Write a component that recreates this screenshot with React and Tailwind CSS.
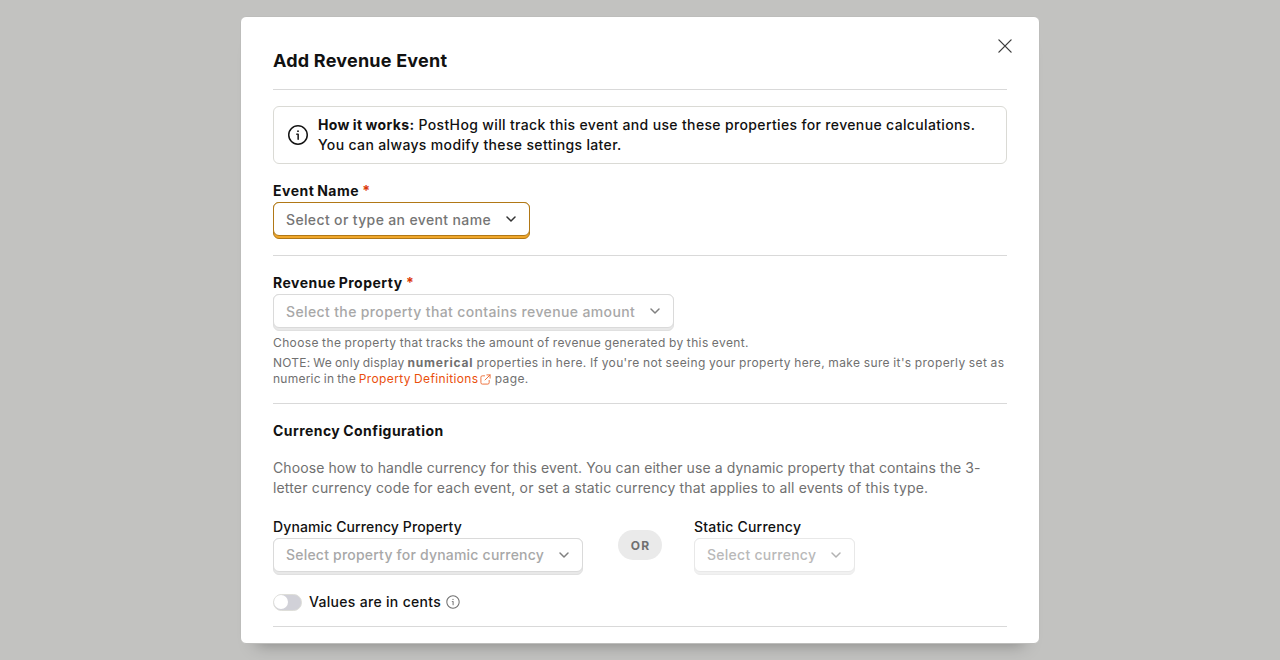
import React from "react";

function Divider({ className = "" }) {
  return <div className={"h-px shrink-0 bg-[#d9d9d9] " + className} />;
}

function Chevron({ className = "" }) {
  return (
    <svg viewBox="0 0 12 8" className={"h-2 w-3 shrink-0 " + className} fill="none" stroke="currentColor" strokeWidth="1.5" strokeLinecap="round" strokeLinejoin="round">
      <path d="M2 2 6 6 10 2" />
    </svg>
  );
}

function InfoIcon({ className = "" }) {
  return (
    <svg viewBox="0 0 24 24" className={"shrink-0 " + className} fill="currentColor">
      <path fillRule="evenodd" d="M12 3.5a8.5 8.5 0 1 0 0 17 8.5 8.5 0 0 0 0-17ZM2 12C2 6.477 6.477 2 12 2s10 4.477 10 10-4.477 10-10 10S2 17.523 2 12Z" />
      <path d="M10 11.150a.65.65 0 0 1 .65-.65h1.500a.75.75 0 0 1 .75.75v5a.75.75 0 0 1-1.500 0v-4.450h-.75a.65.65 0 0 1-.65-.65Z" />
      <circle cx="12" cy="8.200" r="0.900" />
    </svg>
  );
}

function SelectButton({ children, width, active, faded, raised, spacing }) {
  const frame = active ? "border-[#b17816] bg-[#f1a82c]" : "border-[#e0e0e0] bg-[#e8e8e8]";
  const face = active ? "border-[#b17816]" : "border-[#dadada]";
  return (
    <div className={"flex h-[37px] flex-col rounded-md border " + frame + " " + width + (faded ? " opacity-60" : "")}>
      <div className={"-mx-px -mt-px flex h-[34px] items-center justify-between rounded-md border bg-white pl-3 pr-3 " + face}>
        <span className={"whitespace-nowrap text-sm font-medium leading-5 " + spacing + (raised ? "" : " pt-px") + (active ? " text-[#757575]" : faded ? " text-[#8c8c8c]" : " text-[#a8a8a8]")}>{children}</span>
        <Chevron className={active ? "text-[#333333]" : "text-[#808080]"} />
      </div>
    </div>
  );
}

function Label({ children, bold, required, spacing = "" }) {
  return (
    <div className={"mb-px h-5 whitespace-nowrap text-sm leading-5 " + (bold ? "font-bold tracking-[0.49px] [word-spacing:-0.9px] " : "font-medium ") + spacing}>
      {children}
      {required && <span className="text-[#db3707] [word-spacing:-0.5px]"> *</span>}
    </div>
  );
}

export default function App() {
  return (
    <div className="flex h-[660px] w-full justify-center overflow-hidden bg-[#c2c2c0] pt-4 font-['Inter',sans-serif] text-[#111111]">
      <div className="relative flex h-[628px] w-[800px] flex-col rounded-md border border-[#bdbdbb] bg-white px-8 pt-8 shadow-[0_16px_16px_-16px_rgba(0,0,0,0.35)]">
        <button className="absolute right-[25px] top-[20px] flex size-[18px] items-center justify-center" aria-label="Close">
          <svg viewBox="0 0 18 18" className="size-[18px]" fill="none" stroke="#3c3c3c" strokeWidth="1.3" strokeLinecap="round">
            <path d="M2.900 2.900 15.100 15.100M15.100 2.900 2.900 15.100" />
          </svg>
        </button>
        <h3 className="h-6 text-lg font-bold leading-6 tracking-[0.22px]">Add Revenue Event</h3>
        <Divider className="mt-4" />
        <div className="mt-4 flex h-[58px] items-center rounded-md border border-[#dadad5] pl-3">
          <InfoIcon className="size-6" />
          <p className="ml-2 text-sm font-medium leading-5 tracking-[0.35px]">
            <strong className="font-bold tracking-[0.36px] [word-spacing:-0.7px]">How it works:</strong> PostHog will track this event and use these properties for revenue calculations.
            <br />
            You can always modify these settings later.
          </p>
        </div>

        <div className="mt-[17px]">
          <Label bold required>Event Name</Label>
          <SelectButton width="w-[257px]" spacing="tracking-[0.36px]" active>Select or type an event name</SelectButton>
        </div>
        <Divider className="mt-4" />

        <div className="mt-[17px]">
          <Label bold required>Revenue Property</Label>
          <SelectButton width="w-[401px]" spacing="tracking-[0.37px]">Select the property that contains revenue amount</SelectButton>
          <p className="mt-1 text-xs leading-4 tracking-[0.38px] text-[#707070] [word-spacing:-0.5px]">Choose the property that tracks the amount of revenue generated by this event.</p>
          <p className="mt-1 whitespace-nowrap text-xs leading-4 tracking-[0.39px] text-[#707070] [word-spacing:-0.5px]">
            <span className="tracking-[0.25px] [word-spacing:-0.8px]">NOTE: We only display </span>
            <strong className="font-bold tracking-[0.8px]">numerical</strong> properties in here. If you're not seeing your property here, make sure it's properly set as
            <br />
            <span className="tracking-[0.24px] [word-spacing:-0.7px]">numeric in the </span>
            <span className="text-[#ea4f0c]">
              <span className="tracking-[0.36px]">Property Definitions</span>
              <svg viewBox="0 0 12 12" className="ml-0.5 inline-block size-[11px] align-[-2px] opacity-85" fill="none" stroke="currentColor" strokeWidth="1" strokeLinecap="round" strokeLinejoin="round">
                <path d="M5 2H2.500A1.500 1.500 0 0 0 1 3.500v6A1.500 1.500 0 0 0 2.500 11h6A1.500 1.500 0 0 0 10 9.500V7M7.500 1H11v3.500M11 1 5.500 6.500" />
              </svg>
            </span>{" "}
            page.
          </p>
        </div>
        <Divider className="mt-4" />

        <h4 className="mt-[17px] text-sm font-bold leading-5 tracking-[0.44px] [word-spacing:-0.7px]">Currency Configuration</h4>
        <p className="mt-[17px] whitespace-nowrap text-sm leading-5 tracking-[0.09px] text-[#707070]">
          Choose how to handle currency for this event. You can either use a dynamic property that contains the 3-
          <br />
          <span className="tracking-[0.16px]">letter currency code for each event, or set a static currency that applies to all events of this type.</span>
        </p>

        <div className="mt-[19px] flex">
          <div className="w-[310px]">
            <Label spacing="tracking-[0.11px]">Dynamic Currency Property</Label>
            <SelectButton width="w-[310px]" spacing="tracking-[0.21px]" raised>Select property for dynamic currency</SelectButton>
          </div>
          <div className="ml-[35px] mt-[13px] flex h-[30px] w-11 items-center justify-center rounded-full bg-[#eaeaea] pl-px pt-px text-xs font-bold tracking-[1.3px] text-[#707070]">OR</div>
          <div className="ml-8">
            <Label spacing="tracking-[0.22px]">Static Currency</Label>
            <SelectButton width="w-[161px]" spacing="tracking-[0.26px]" faded raised>Select currency</SelectButton>
          </div>
        </div>

        <div className="mt-[17px] flex h-5 items-center">
          <div className="flex h-[17px] w-[29px] items-center rounded-full border border-[#deded9] bg-[#d1d1d8]">
            <div className="size-3.5 rounded-full bg-white" />
          </div>
          <span className="ml-[7px] text-sm font-medium leading-5 tracking-[0.31px]">Values are in cents</span>
          <InfoIcon className="ml-1 size-4 text-[#707070]" />
        </div>
        <Divider className="mt-[14px]" />
      </div>
    </div>
  );
}
